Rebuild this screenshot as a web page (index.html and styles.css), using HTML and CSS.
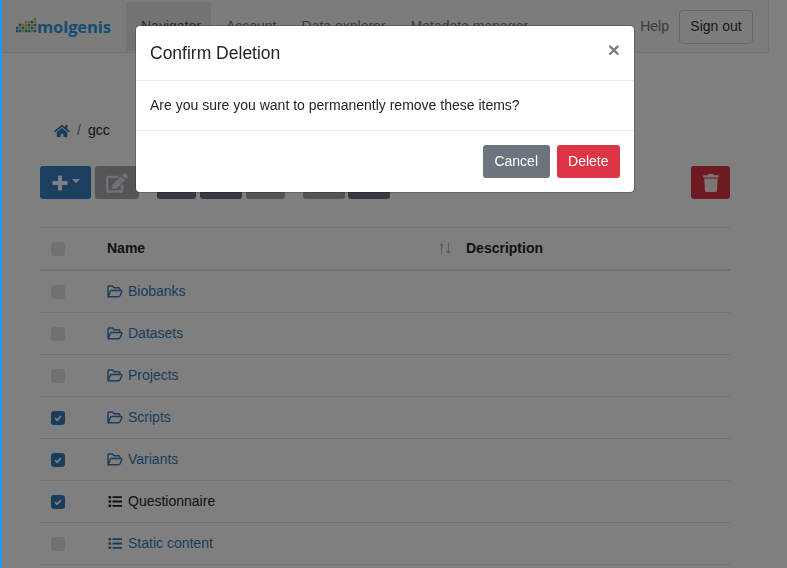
FILE: index.html
```html
<!DOCTYPE html>
<html lang="en">
<head>
<meta charset="utf-8">
<title>Navigator</title>
<link rel="stylesheet" href="styles.css">
</head>
<body>
<div class="page">
  <nav class="navbar">
    <a class="brand">
      <svg class="brand-dots" viewBox="0 0 22 18" width="22" height="18">
        <g class="dots-blue">
          <rect x="0" y="10" width="2" height="2"/><rect x="0" y="13" width="2" height="2"/>
          <rect x="3" y="7" width="2" height="2"/><rect x="3" y="13" width="2" height="2"/>
          <rect x="6" y="10" width="2" height="2"/><rect x="9" y="13" width="2" height="2"/>
          <rect x="12" y="7" width="2" height="2"/><rect x="12" y="13" width="2" height="2"/>
          <rect x="15" y="4" width="2" height="2"/><rect x="15" y="10" width="2" height="2"/>
          <rect x="18" y="7" width="2" height="2"/><rect x="18" y="13" width="2" height="2"/>
        </g>
        <g class="dots-green">
          <rect x="3" y="10" width="2" height="2"/><rect x="6" y="7" width="2" height="2"/>
          <rect x="6" y="13" width="2" height="2"/><rect x="9" y="4" width="2" height="2"/>
          <rect x="9" y="7" width="2" height="2"/><rect x="9" y="10" width="2" height="2"/>
          <rect x="12" y="4" width="2" height="2"/><rect x="12" y="10" width="2" height="2"/>
          <rect x="15" y="7" width="2" height="2"/><rect x="15" y="13" width="2" height="2"/>
          <rect x="18" y="1" width="2" height="2"/><rect x="18" y="4" width="2" height="2"/>
          <rect x="18" y="10" width="2" height="2"/>
        </g>
      </svg>
      <span class="brand-text">molgenis</span>
    </a>
    <ul class="nav">
      <li class="nav-item active">Navigator</li>
      <li class="nav-item">Account</li>
      <li class="nav-item">Data explorer</li>
      <li class="nav-item">Metadata manager</li>
    </ul>
    <div class="nav-right">
      <span class="help">Help</span>
      <button class="signout">Sign out</button>
    </div>
  </nav>

  <main class="content">
    <div class="breadcrumb">
      <svg class="home" viewBox="0 0 576 512" width="16" height="14"><path d="M280.37 148.26L96 300.11V464a16 16 0 0 0 16 16l112.06-.29a16 16 0 0 0 15.92-16V368a16 16 0 0 1 16-16h64a16 16 0 0 1 16 16v95.64a16 16 0 0 0 16 16.05L464 480a16 16 0 0 0 16-16V300L295.67 148.26a12.19 12.19 0 0 0-15.3 0zM571.6 251.47L488 182.56V44.05a12 12 0 0 0-12-12h-56a12 12 0 0 0-12 12v72.61L318.47 43a48 48 0 0 0-61 0L4.34 251.47a12 12 0 0 0-1.6 16.9l25.5 31A12 12 0 0 0 45.15 301l235.22-193.74a12.19 12.19 0 0 1 15.3 0L530.9 301a12 12 0 0 0 16.9-1.6l25.5-31a12 12 0 0 0-1.7-16.93z"/></svg>
      <span class="crumb-sep">/</span>
      <span>gcc</span>
    </div>

    <div class="toolbar">
      <button class="tbtn primary add">
        <svg viewBox="0 0 18 18" width="18" height="18"><path d="M7 1.5h4V7h5.5v4H11v5.5H7V11H1.5V7H7z"/></svg>
        <span class="caret"></span>
      </button>
      <button class="tbtn muted edit">
        <svg viewBox="0 0 576 512" width="22" height="20"><path d="M402.6 83.2l90.2 90.2c3.8 3.8 3.8 10 0 13.8L274.4 405.6l-92.8 10.3c-12.4 1.4-22.9-9.1-21.5-21.5l10.3-92.8L388.8 83.2c3.8-3.8 10-3.8 13.8 0zm162-22.9l-48.8-48.8c-15.2-15.2-39.9-15.2-55.2 0l-35.4 35.4c-3.8 3.8-3.8 10 0 13.8l90.2 90.2c3.8 3.8 10 3.8 13.8 0l35.4-35.4c15.2-15.3 15.2-40 0-55.2zM384 346.2V448H64V128h229.8c3.2 0 6.2-1.3 8.5-3.5l40-40c7.6-7.6 2.2-20.5-8.5-20.5H48C21.5 64 0 85.5 0 112v352c0 26.5 21.5 48 48 48h352c26.5 0 48-21.5 48-48V306.2c0-10.7-12.9-16-20.5-8.5l-40 40c-2.2 2.3-3.5 5.3-3.5 8.5z"/></svg>
      </button>
      <div class="tgroup first">
        <button class="tbtn dark w39"></button>
        <button class="tbtn dark w42"></button>
        <button class="tbtn muted w39"></button>
      </div>
      <div class="tgroup second">
        <button class="tbtn muted w42"></button>
        <button class="tbtn dark w42"></button>
      </div>
      <button class="tbtn danger trash">
        <svg viewBox="0 0 448 512" width="16" height="18"><path d="M432 32H312l-9.4-18.7A24 24 0 0 0 281.1 0H166.8a23.72 23.72 0 0 0-21.4 13.3L136 32H16A16 16 0 0 0 0 48v32a16 16 0 0 0 16 16h416a16 16 0 0 0 16-16V48a16 16 0 0 0-16-16zM53.2 467a48 48 0 0 0 47.9 45h245.8a48 48 0 0 0 47.9-45L416 128H32z"/></svg>
      </button>
    </div>

    <div class="table">
      <div class="row head">
        <span class="check"></span>
        <span class="name-col">Name</span>
        <svg class="sort" viewBox="0 0 14 13" width="14" height="13"><path d="M3.5 1L1 4h2v8h1V4h2zM10.5 12L13 9h-2V1h-1v8H8z"/></svg>
        <span class="desc-col">Description</span>
      </div>
      <div class="row">
        <span class="check"></span>
        <a class="name-col link"><svg class="ico" viewBox="0 0 16 13" width="16" height="13"><path class="folder" d="M1 11V2.2C1 1.5 1.5 1 2.2 1h3.3l1.6 1.7h4.6c.7 0 1.2.5 1.2 1.2V5.2M1.2 11.6l2.2-5.3c.2-.5.6-.8 1.1-.8h9.4c.7 0 1.2.7.9 1.3l-1.9 4.2c-.2.4-.6.7-1.1.7H2c-.6 0-.9-.5-.8-.1z"/></svg>Biobanks</a>
      </div>
      <div class="row">
        <span class="check"></span>
        <a class="name-col link"><svg class="ico" viewBox="0 0 16 13" width="16" height="13"><path class="folder" d="M1 11V2.2C1 1.5 1.5 1 2.2 1h3.3l1.6 1.7h4.6c.7 0 1.2.5 1.2 1.2V5.2M1.2 11.6l2.2-5.3c.2-.5.6-.8 1.1-.8h9.4c.7 0 1.2.7.9 1.3l-1.9 4.2c-.2.4-.6.7-1.1.7H2c-.6 0-.9-.5-.8-.1z"/></svg>Datasets</a>
      </div>
      <div class="row">
        <span class="check"></span>
        <a class="name-col link"><svg class="ico" viewBox="0 0 16 13" width="16" height="13"><path class="folder" d="M1 11V2.2C1 1.5 1.5 1 2.2 1h3.3l1.6 1.7h4.6c.7 0 1.2.5 1.2 1.2V5.2M1.2 11.6l2.2-5.3c.2-.5.6-.8 1.1-.8h9.4c.7 0 1.2.7.9 1.3l-1.9 4.2c-.2.4-.6.7-1.1.7H2c-.6 0-.9-.5-.8-.1z"/></svg>Projects</a>
      </div>
      <div class="row">
        <span class="check on"><svg viewBox="0 0 14 14" width="14" height="14"><path d="M4 7.2l2.1 2 3.9-4.2"/></svg></span>
        <a class="name-col link"><svg class="ico" viewBox="0 0 16 13" width="16" height="13"><path class="folder" d="M1 11V2.2C1 1.5 1.5 1 2.2 1h3.3l1.6 1.7h4.6c.7 0 1.2.5 1.2 1.2V5.2M1.2 11.6l2.2-5.3c.2-.5.6-.8 1.1-.8h9.4c.7 0 1.2.7.9 1.3l-1.9 4.2c-.2.4-.6.7-1.1.7H2c-.6 0-.9-.5-.8-.1z"/></svg>Scripts</a>
      </div>
      <div class="row">
        <span class="check on"><svg viewBox="0 0 14 14" width="14" height="14"><path d="M4 7.2l2.1 2 3.9-4.2"/></svg></span>
        <a class="name-col link"><svg class="ico" viewBox="0 0 16 13" width="16" height="13"><path class="folder" d="M1 11V2.2C1 1.5 1.5 1 2.2 1h3.3l1.6 1.7h4.6c.7 0 1.2.5 1.2 1.2V5.2M1.2 11.6l2.2-5.3c.2-.5.6-.8 1.1-.8h9.4c.7 0 1.2.7.9 1.3l-1.9 4.2c-.2.4-.6.7-1.1.7H2c-.6 0-.9-.5-.8-.1z"/></svg>Variants</a>
      </div>
      <div class="row">
        <span class="check on"><svg viewBox="0 0 14 14" width="14" height="14"><path d="M4 7.2l2.1 2 3.9-4.2"/></svg></span>
        <span class="name-col"><svg class="ico" viewBox="0 0 16 13" width="16" height="13"><path d="M1.5 1h2.6v2.4H1.5zM1.5 5.3h2.6v2.4H1.5zM1.5 9.6h2.6V12H1.5zM5.5 1.3H15v1.8H5.5zM5.5 5.6H15v1.8H5.5zM5.5 9.9H15v1.8H5.5z"/></svg>Questionnaire</span>
      </div>
      <div class="row">
        <span class="check"></span>
        <a class="name-col link"><svg class="ico" viewBox="0 0 16 13" width="16" height="13"><path d="M1.5 1h2.6v2.4H1.5zM1.5 5.3h2.6v2.4H1.5zM1.5 9.6h2.6V12H1.5zM5.5 1.3H15v1.8H5.5zM5.5 5.6H15v1.8H5.5zM5.5 9.9H15v1.8H5.5z"/></svg>Static content</a>
      </div>
    </div>
  </main>
</div>

<div class="backdrop">
  <div class="modal">
    <div class="modal-header">
      <h5 class="modal-title">Confirm Deletion</h5>
      <span class="close">×</span>
    </div>
    <div class="modal-body">Are you sure you want to permanently remove these items?</div>
    <div class="modal-footer">
      <button class="mbtn cancel">Cancel</button>
      <button class="mbtn delete">Delete</button>
    </div>
  </div>
</div>
</body>
</html>
```

FILE: styles.css
```css
* { box-sizing: border-box; }
html, body { margin: 0; height: 100%; overflow: hidden; }
body {
  background: #fff;
  color: #212529;
  font-family: "Liberation Sans", Arial, sans-serif;
  font-size: 14px;
  line-height: 21px;
}
.page {
  height: 568px;
  overflow: hidden;
  border-left: 2px solid #2196f3;
}
.navbar {
  display: flex;
  align-items: center;
  height: 53px;
  width: 767px;
  padding: 2px 0 1px 0;
  border: 1px solid #e7e7e7;
  border-top: 0;
  border-left: 0;
  background: #f8f8f8;
}
.brand {
  display: flex;
  align-items: center;
  width: 124px;
  padding-left: 14px;
  flex: none;
}
.brand-dots { flex: none; margin-top: -2px; margin-right: -1px; }
.dots-blue { fill: #2a8fd8; stroke: #2a8fd8; stroke-width: .5; }
.dots-green { fill: #c6cc3c; stroke: #c6cc3c; stroke-width: .5; }
.brand-text {
  color: #2a9be0;
  font-family: "Open Sans", sans-serif;
  font-weight: 700;
  font-size: 16.5px;
  letter-spacing: -0.1px;
}
.nav {
  display: flex;
  list-style: none;
  margin: 0;
  padding: 0;
  height: 49px;
  align-self: flex-start;
}
.nav-item {
  padding: 14px 10px 14px 15px;
  color: #777;
  font-size: 14px;
}
.nav-item.active { background: #e7e7e7; color: #555; }
.nav-right { margin-left: auto; display: flex; align-items: center; gap: 10px; padding-right: 15px; }
.help { color: #777; }
.signout {
  width: 74px;
  height: 34px;
  padding: 0;
  border: 1px solid #ccc;
  border-radius: 4px;
  background: transparent;
  color: #333;
  font: inherit;
}
.content { padding: 67px 57px 0 38px; }
.breadcrumb {
  display: flex;
  align-items: center;
  height: 21px;
  margin-left: 14px;
}
.home { fill: #337ab7; margin-right: 7px; }
.crumb-sep { color: #6c757d; margin-right: 7px; }
.toolbar { display: flex; margin-top: 25px; height: 33px; }
.tbtn {
  display: flex;
  align-items: center;
  justify-content: center;
  height: 33px;
  padding: 0;
  border: 0;
  border-radius: 3px;
  flex: none;
}
.primary { background: #377fc0; }
.dark { background: #6c757d; }
.muted { background: #a7acb1; }
.danger { background: #dc3545; }
.add { width: 51px; gap: 3px; }
.add svg { fill: #fff; }
.caret {
  width: 0;
  height: 0;
  border-left: 4px solid transparent;
  border-right: 4px solid transparent;
  border-top: 4px solid #fff;
  margin-top: -3px;
}
.edit { width: 44px; margin-left: 4px; }
.edit svg { fill: #fff; opacity: .65; }
.tgroup { display: flex; gap: 4px; }
.first { margin-left: 18px; }
.second { margin-left: 18px; gap: 3px; }
.w39 { width: 39px; }
.w42 { width: 42px; }
.trash { width: 39px; margin-left: auto; }
.trash svg { fill: #fff; opacity: .9; }
.table { margin-top: 28px; border-top: 1px solid #dee2e6; }
.row {
  display: flex;
  align-items: center;
  height: 42px;
  padding-left: 11px;
  border-bottom: 1px solid #dee2e6;
}
.row.head { border-bottom-width: 2px; height: 43px; font-weight: 700; }
.check {
  width: 14px;
  height: 14px;
  flex: none;
  border-radius: 3px;
  background: #dee2e6;
  display: flex;
}
.check.on { background: #337ab7; }
.check svg { fill: none; stroke: #fff; stroke-width: 1.7; }
.name-col { margin-left: 42px; display: flex; align-items: center; color: #212529; }
.link { color: #337ab7; }
.head .name-col { width: 331px; }
.sort { fill: #b5b9bd; flex: none; }
.desc-col { margin-left: 14px; }
.ico { flex: none; margin-right: 5px; fill: currentColor; }
.ico .folder { fill: none; stroke: currentColor; stroke-width: 1.4; }
.backdrop {
  position: fixed;
  inset: 0 0 0 2px;
  background: rgba(0, 0, 0, .5);
  display: flex;
  justify-content: center;
  align-items: flex-start;
  padding: 25px 19px 0 0;
}
.modal {
  width: 500px;
  background: #fff;
  border: 1px solid rgba(0, 0, 0, .2);
  background-clip: padding-box;
  border-radius: 5px;
}
.modal-header {
  display: flex;
  justify-content: space-between;
  height: 55px;
  padding: 14px 14px 0;
  border-bottom: 1px solid #e9ecef;
}
.modal-title {
  margin: 0;
  font-size: 17.5px;
  font-weight: 400;
  line-height: 26px;
}
.close {
  color: #7d7d7d;
  font-size: 21px;
  font-weight: 700;
  line-height: 21px;
  margin-top: -1px;
}
.modal-body {
  height: 50px;
  padding: 14px;
  border-bottom: 1px solid #e9ecef;
}
.modal-footer {
  display: flex;
  justify-content: flex-end;
  gap: 7px;
  height: 61px;
  padding: 14px;
}
.mbtn {
  height: 33px;
  padding: 0 11.5px;
  border: 0;
  border-radius: 3px;
  color: #fff;
  font: inherit;
}
.cancel { background: #6c757d; }
.delete { background: #dc3545; }
```
